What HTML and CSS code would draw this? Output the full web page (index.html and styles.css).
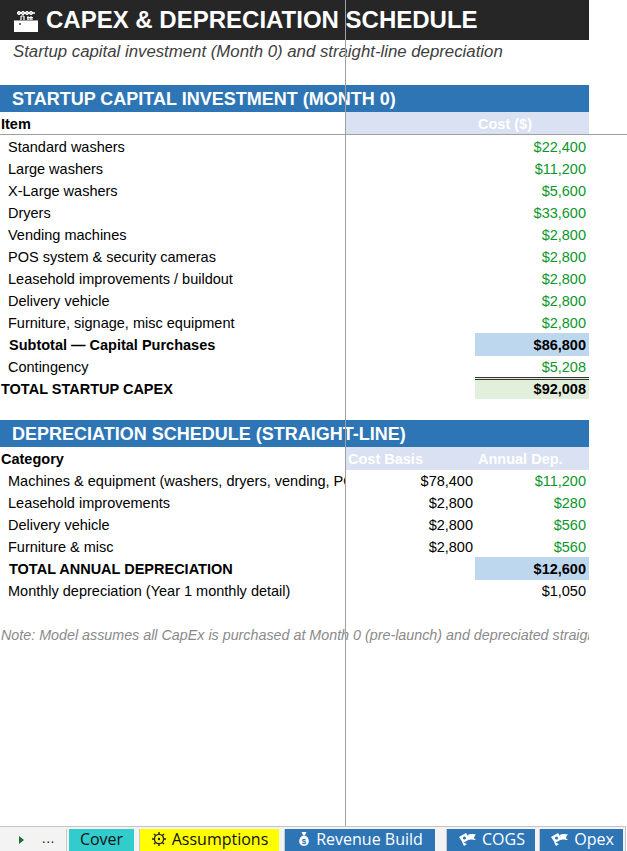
FILE: index.html
```html
<!DOCTYPE html>
<html>
<head>
<meta charset="utf-8">
<link rel="stylesheet" href="styles.css">
</head>
<body>
<div class="app">
  <div class="sheet">
    <div class="title-bar">
      <svg class="title-icon" width="26" height="22" viewBox="0 0 26 22">
        <rect x="1" y="10" width="24" height="12" fill="#ffffff"/>
        <rect x="4" y="2" width="18" height="2" fill="#cfcfcf"/>
        <circle cx="6" cy="3" r="1.6" fill="none" stroke="#ffffff" stroke-width="1"/>
        <circle cx="10" cy="3" r="1.6" fill="none" stroke="#ffffff" stroke-width="1"/>
        <circle cx="14" cy="3" r="1.6" fill="none" stroke="#ffffff" stroke-width="1"/>
        <circle cx="18" cy="3" r="1.6" fill="none" stroke="#ffffff" stroke-width="1"/>
        <path d="M8 6 L8 10 M11 6 L11 10 M8 6 L11 6" stroke="#ffffff" stroke-width="1.2" fill="none"/>
        <path d="M15 6 L15 10 M18 6 L18 10 M14 7.5 L20 7.5 M14 9 L20 9" stroke="#ffffff" stroke-width="1" fill="none"/>
        <rect x="6" y="13" width="2" height="2" fill="#8a6a5a"/>
        <rect x="1" y="10" width="24" height="1" fill="#9a9a9a"/>
      </svg>
      <span>CAPEX &amp; DEPRECIATION SCHEDULE</span>
    </div>
    <div class="subtitle">Startup capital investment (Month 0) and straight-line depreciation</div>
    <div class="blank"></div>

    <div class="section">STARTUP CAPITAL INVESTMENT (MONTH 0)</div>
    <div class="row head">
      <div class="c1 bold">Item</div>
      <div class="c2 band"></div>
      <div class="c3 band hl">Cost ($)</div>
    </div>
    <div class="row"><div class="c1 ind">Standard washers</div><div class="c2"></div><div class="c3 num green">$22,400</div></div>
    <div class="row"><div class="c1 ind">Large washers</div><div class="c2"></div><div class="c3 num green">$11,200</div></div>
    <div class="row"><div class="c1 ind">X-Large washers</div><div class="c2"></div><div class="c3 num green">$5,600</div></div>
    <div class="row"><div class="c1 ind">Dryers</div><div class="c2"></div><div class="c3 num green">$33,600</div></div>
    <div class="row"><div class="c1 ind">Vending machines</div><div class="c2"></div><div class="c3 num green">$2,800</div></div>
    <div class="row"><div class="c1 ind">POS system &amp; security cameras</div><div class="c2"></div><div class="c3 num green">$2,800</div></div>
    <div class="row"><div class="c1 ind">Leasehold improvements / buildout</div><div class="c2"></div><div class="c3 num green">$2,800</div></div>
    <div class="row"><div class="c1 ind">Delivery vehicle</div><div class="c2"></div><div class="c3 num green">$2,800</div></div>
    <div class="row"><div class="c1 ind">Furniture, signage, misc equipment</div><div class="c2"></div><div class="c3 num green">$2,800</div></div>
    <div class="row"><div class="c1 ind bold">Subtotal — Capital Purchases</div><div class="c2"></div><div class="c3 num bold sub">$86,800</div></div>
    <div class="row"><div class="c1 ind">Contingency</div><div class="c2"></div><div class="c3 num green">$5,208</div></div>
    <div class="row"><div class="c1 bold">TOTAL STARTUP CAPEX</div><div class="c2"></div><div class="c3 num bold total">$92,008</div></div>
    <div class="blank"></div>

    <div class="section">DEPRECIATION SCHEDULE (STRAIGHT-LINE)</div>
    <div class="row head2">
      <div class="c1 bold">Category</div>
      <div class="c2 band hl">Cost Basis</div>
      <div class="c3 band hl">Annual Dep.</div>
    </div>
    <div class="row"><div class="c1 ind">Machines &amp; equipment (washers, dryers, vending, POS)</div><div class="c2 num">$78,400</div><div class="c3 num green">$11,200</div></div>
    <div class="row"><div class="c1 ind">Leasehold improvements</div><div class="c2 num">$2,800</div><div class="c3 num green">$280</div></div>
    <div class="row"><div class="c1 ind">Delivery vehicle</div><div class="c2 num">$2,800</div><div class="c3 num green">$560</div></div>
    <div class="row"><div class="c1 ind">Furniture &amp; misc</div><div class="c2 num">$2,800</div><div class="c3 num green">$560</div></div>
    <div class="row"><div class="c1 ind bold">TOTAL ANNUAL DEPRECIATION</div><div class="c2"></div><div class="c3 num bold sub">$12,600</div></div>
    <div class="row"><div class="c1 ind">Monthly depreciation (Year 1 monthly detail)</div><div class="c2"></div><div class="c3 num">$1,050</div></div>
    <div class="blank2"></div>
    <div class="note">Note: Model assumes all CapEx is purchased at Month 0 (pre-launch) and depreciated straight-line over useful life.</div>

    <div class="freeze-v"></div>
    <div class="freeze-h"></div>
  </div>

  <div class="tabbar">
    <div class="nav">
      <svg width="8" height="10" viewBox="0 0 8 10"><path d="M1 1 L6 5 L1 9 Z" fill="#1e6b34"/></svg>
      <span class="dots">...</span>
    </div>
    <div class="tab cover">Cover</div>
    <div class="tab assume">
      <svg width="16" height="16" viewBox="0 0 16 16"><circle cx="8" cy="8" r="4.6" fill="none" stroke="#222" stroke-width="1.4"/><path d="M8 1 V3.2 M8 12.8 V15 M1 8 H3.2 M12.8 8 H15 M3 3 L4.6 4.6 M11.4 11.4 L13 13 M3 13 L4.6 11.4 M11.4 4.6 L13 3" stroke="#222" stroke-width="1.4"/><circle cx="8" cy="8" r="1.2" fill="#222"/></svg>
      Assumptions
    </div>
    <div class="tab blue rev">
      <svg width="14" height="16" viewBox="0 0 14 16"><path d="M4.5 1 L9.5 1 L8 4 L6 4 Z" fill="#fff"/><path d="M6 4.5 C1 6 0.5 15 7 15 C13.5 15 13 6 8 4.5 Z" fill="#fff"/><text x="7" y="13" font-size="8" font-family="Liberation Sans, sans-serif" font-weight="bold" text-anchor="middle" fill="#2e75b6">$</text></svg>
      Revenue Build
    </div>
    <div class="tab blue cogs">
      <svg width="20" height="16" viewBox="0 0 20 16"><path d="M2 6 L9 2 L13 8 L6 12 Z" fill="#fff"/><circle cx="7.5" cy="7" r="1.6" fill="#2e75b6"/><path d="M11 4 C14 2 16 4 19 3 C17 6 16 7 19 9 C16 9 14 8 12 9" fill="#fff"/><path d="M5 11 L7 15 L10 13" fill="#fff"/></svg>
      COGS
    </div>
    <div class="tab blue opex">
      <svg width="20" height="16" viewBox="0 0 20 16"><path d="M2 6 L9 2 L13 8 L6 12 Z" fill="#fff"/><circle cx="7.5" cy="7" r="1.6" fill="#2e75b6"/><path d="M11 4 C14 2 16 4 19 3 C17 6 16 7 19 9 C16 9 14 8 12 9" fill="#fff"/><path d="M5 11 L7 15 L10 13" fill="#fff"/></svg>
      Opex
    </div>
  </div>
</div>
</body>
</html>
```

FILE: styles.css
```css
* { box-sizing: border-box; }
html, body { margin: 0; padding: 0; background: #ffffff; }
body { font-family: "Liberation Sans", Arial, sans-serif; color: #000; }

.app { width: 627px; height: 851px; display: flex; flex-direction: column; overflow: hidden; }
.sheet { position: relative; flex: 1; overflow: hidden; }

.title-bar {
  width: 589px; height: 40px; background: #262626; color: #fff;
  display: flex; align-items: center; gap: 7px; padding-left: 13px;
  font-weight: bold; font-size: 24px; white-space: nowrap; overflow: hidden;
}
.title-icon { flex: none; margin-top: 1px; }

.subtitle {
  height: 24px; padding-left: 13px; line-height: 24px;
  font-style: italic; font-size: 16.8px; color: #404040; white-space: nowrap;
}
.blank { height: 21px; }
.blank2 { height: 22px; }

.section {
  width: 589px; height: 27px; background: #2e75b6; color: #fff;
  font-weight: bold; font-size: 18px; line-height: 28px; padding-left: 12px; white-space: nowrap;
}

.row {
  display: grid; grid-template-columns: 345px 130px 114px;
  height: 22px; line-height: 22px; font-size: 14.5px; white-space: nowrap;
}
.row > div { padding-top: 1px; }
.row.head { height: 23px; }
.c1 { overflow: hidden; padding-left: 1px; }
.c1.ind { padding-left: 8px; }
.c1.bold.ind { padding-left: 9px; }
.bold { font-weight: bold; }
.num { text-align: right; padding-right: 3px; }
.c2.num { padding-right: 2px; }
.green { color: #0b962a; }
.band { background: #d9e1f2; }
.hl { color: #ffffff; font-weight: bold; padding-left: 3px; }
.sub { background: #bdd7ee; }
.row > .total { background: #e2efda; border-top: 3px double #333; line-height: 19px; padding-top: 0; }

.note {
  width: 589px; height: 24px; line-height: 24px; overflow: hidden; white-space: nowrap;
  font-style: italic; font-size: 14.3px; color: #8a8a8a; padding-left: 1px;
}

.freeze-v { position: absolute; left: 345px; top: 0; bottom: 0; width: 1px; background: #a0a0a0; }
.freeze-h { position: absolute; left: 0; right: 0; top: 134px; height: 1px; background: #a0a0a0; }

.tabbar {
  height: 25px; flex: none; display: flex; align-items: flex-end;
  border-top: 1px solid #c4c4c4; background: #f3f3f3; width: 626px; border-right: 1px solid #c4c4c4;
  font-family: "Open Sans", "Noto Sans", sans-serif; font-size: 16px;
  padding-top: 2px;
}
.nav { width: 67px; height: 22px; display: flex; align-items: center; padding-left: 18px; gap: 16px; border-right: 1px solid #c8c8c8; }
.dots { font-size: 13px; color: #222; letter-spacing: 1px; margin-top: -4px; }
.tab {
  height: 22px; display: flex; align-items: center; justify-content: center; gap: 5px;
  line-height: 20px; padding-bottom: 3px; white-space: nowrap; border-left: 1px solid #c8c8c8;
}
.cover { width: 65px; background: #33cccc; color: #111; margin-left: 2px; border-left: none; }
.assume { width: 140px; background: #ffff00; color: #111; margin-left: 5px; }
.blue { background: #2e75b6; color: #fff; }
.rev { width: 151px; margin-left: 5px; }
.cogs { width: 89px; margin-left: 11px; }
.opex { width: 84px; margin-left: 4px; }
```
